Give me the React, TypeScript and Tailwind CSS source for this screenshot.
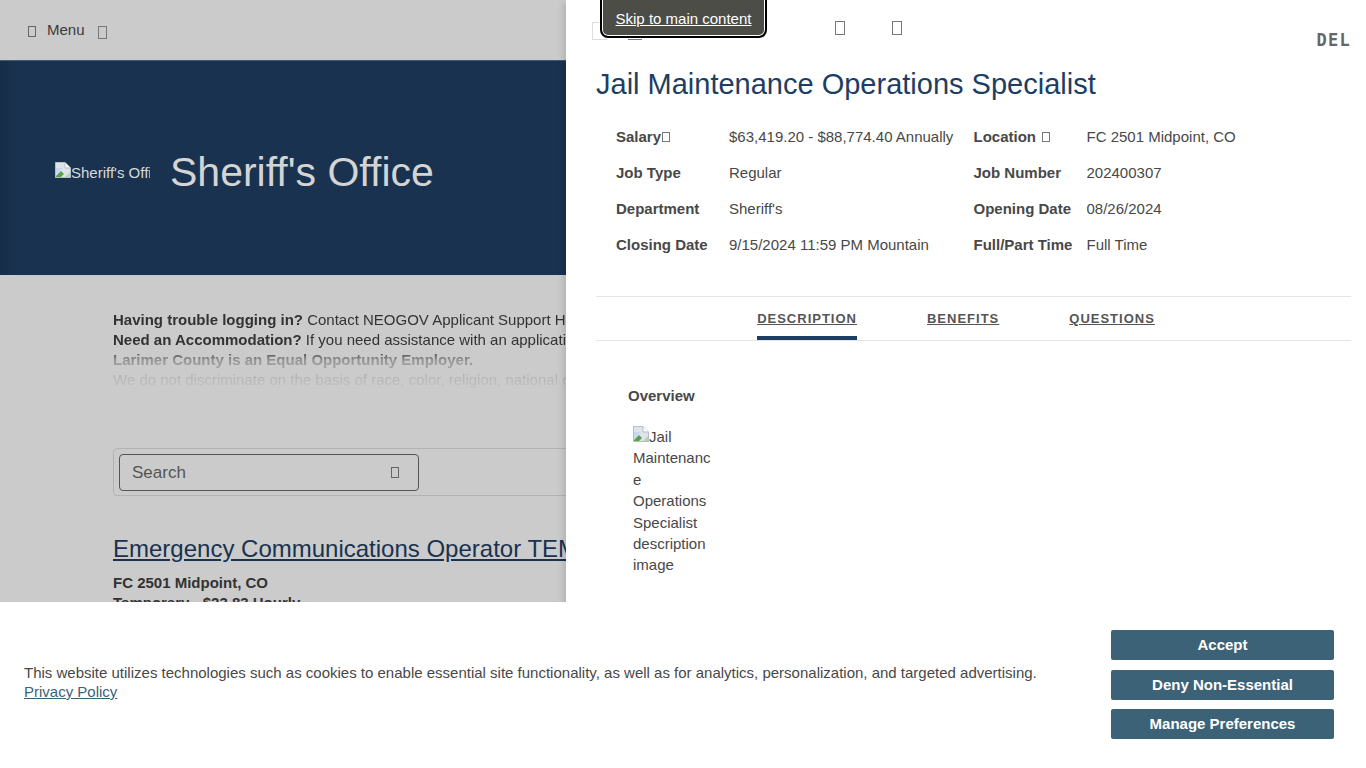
const font = "font-['Liberation_Sans',Arial,sans-serif]";

function Tofu({ className = '' }: { className?: string }) {
  return <span className={`inline-block shrink-0 border border-current ${className}`} />;
}

function BrokenImage() {
  return (
    <svg width="16" height="16" viewBox="0 0 16 16" className="inline-block align-baseline">
      <path d="M0.5 0.5H10L15.5 6V15.5H0.5Z" fill="#dfe3ea" stroke="#b9bdc4" />
      <path d="M1 6H8L1 13Z" fill="#c7d7f2" />
      <path d="M1 14L6 9L9 12L6 15H1Z" fill="#5aa24a" />
      <path d="M10 15L15 10V15Z" fill="#b9d4a8" />
      <path d="M10 .5V6H15.5" fill="#fff" stroke="#b9bdc4" />
    </svg>
  );
}

const facts = [
  ['Salary', '$63,419.20 - $88,774.40 Annually', 'Location', 'FC 2501 Midpoint, CO'],
  ['Job Type', 'Regular', 'Job Number', '202400307'],
  ['Department', "Sheriff's", 'Opening Date', '08/26/2024'],
  ['Closing Date', '9/15/2024 11:59 PM Mountain', 'Full/Part Time', 'Full Time'],
];

function BackgroundPage() {
  return (
    <div className="h-screen overflow-hidden bg-[#cbcbcb] text-[#333]">
      <header className="flex h-[60px] items-center pl-[28px] text-[15px] text-[#3b3b3b]">
        <Tofu className="mt-[2px] h-[11px] w-[8px] text-[#666]" />
        <span className="ml-[11px] mt-[1px]">Menu</span>
        <Tofu className="ml-[13px] mt-[4px] h-[13px] w-[9px] text-[#777]" />
      </header>
      <section className="flex h-[215px] items-center border-t border-[#3d5a78] bg-[linear-gradient(to_right,#162d48,#19324f_16px)] pl-[55px] pt-[9px]">
        <div className="w-[95px] overflow-hidden whitespace-nowrap text-[15px] leading-[20px] text-[#d8d8d8]">
          <BrokenImage />
          Sheriff's Office
        </div>
        <h1 className="ml-[20px] text-[41px] leading-none font-normal text-[#d4d4d4]">Sheriff's Office</h1>
      </section>
      <section className="h-[173px] whitespace-nowrap pl-[113px] pt-[35px] text-[15px] leading-[20px]">
        <div className="h-[100px] overflow-hidden [mask-image:linear-gradient(to_bottom,#000_40%,rgba(0,0,0,0.35)_50%,rgba(0,0,0,0.12)_70%,transparent_85%)]">
          <p><b>Having trouble logging in?</b> Contact NEOGOV Applicant Support Hours</p>
          <p><b>Need an Accommodation?</b> If you need assistance with an application</p>
          <p><b>Larimer County is an Equal Opportunity Employer.</b></p>
          <p>We do not discriminate on the basis of race, color, religion, national origin</p>
        </div>
      </section>
      <div className="ml-[113px] flex h-[48px] w-[600px] items-center rounded-[4px] border border-[#b3b3b3] pl-[5px]">
        <div className="flex h-[37px] w-[300px] items-center justify-between rounded-[4px] border border-[#555] pl-[12px] pr-[19px] text-[17px] text-[#555]">
          <span className="mt-[2px]">Search</span>
          <Tofu className="h-[11px] w-[8px] text-[#666]" />
        </div>
      </div>
      <div className="whitespace-nowrap pl-[113px] pt-[38px]">
        <a className="block text-[24px] leading-[30px] text-[#19324f] underline">Emergency Communications Operator TEMPORARY</a>
        <p className="mt-[9px] text-[15px] leading-[20px] font-bold text-[#333]">FC 2501 Midpoint, CO</p>
        <p className="text-[15px] leading-[20px] font-bold text-[#333]">Temporary - $23.83 Hourly</p>
      </div>
    </div>
  );
}

function JobDrawer() {
  return (
    <aside className="absolute inset-y-0 right-0 w-[800px] overflow-hidden bg-white pl-[30px] pr-[15px] text-[#484848] shadow-[-6px_0_6px_-3px_rgba(0,0,0,0.12)]">
      <div className="relative h-[60px]">
        <Tofu className="absolute left-[-4px] top-[22px] h-[18px] w-[15px] text-[#ddd]" />
        <Tofu className="absolute left-[32px] top-[28px] h-[12px] w-[14px] text-[#777]" />
        <Tofu className="absolute left-[92px] top-[28px] h-[9px] w-[10px] text-[#999]" />
        <Tofu className="absolute left-[239px] top-[21px] h-[14px] w-[10px] text-[#777]" />
        <Tofu className="absolute left-[296px] top-[21px] h-[14px] w-[10px] text-[#777]" />
        <span className="absolute right-0 top-[31px] font-['DejaVu_Sans_Mono',monospace] text-[17px] leading-[18px] font-bold tracking-[1.3px] text-[#666]">DEL</span>
      </div>
      <h2 className="h-[48px] text-[29px] leading-[49px] font-normal text-[#1d3e62]">Jail Maintenance Operations Specialist</h2>
      <div className="mt-[11px] grid grid-cols-[113px_244.5px_113px_1fr] pl-[20px] text-[15px] leading-[36px]">
        {facts.map(([l1, v1, l2, v2]) => (
          <div key={l1} className="contents">
            <div className="flex items-center font-bold">
              {l1}
              {l1 === 'Salary' && <Tofu className="ml-[1px] h-[10px] w-[8px] text-[#777]" />}
            </div>
            <div>{v1}</div>
            <div className="flex items-center font-bold">
              {l2}
              {l2 === 'Location' && <Tofu className="ml-[6px] h-[10px] w-[8px] text-[#777]" />}
            </div>
            <div>{v2}</div>
          </div>
        ))}
      </div>
      <nav className="mt-[33px] flex h-[45px] justify-center gap-[70px] border-y border-[#e5e5e5] pr-[35px] text-[13px] font-bold tracking-[1px] text-[#555]">
        <a className="h-[43px] border-b-4 border-[#1d3e62] pt-[13px] leading-[18px] underline">DESCRIPTION</a>
        <a className="pt-[13px] leading-[18px] underline">BENEFITS</a>
        <a className="pt-[13px] leading-[18px] underline">QUESTIONS</a>
      </nav>
      <div className="pl-[32px] pt-[46px]">
        <h3 className="text-[15px] leading-[18px] font-bold">Overview</h3>
        <div className="ml-[5px] mt-[21px] w-[78px] break-words text-[15px] leading-[21.4px]">
          <BrokenImage />
          Jail Maintenance Operations Specialist description image
        </div>
      </div>
    </aside>
  );
}

function CookieBanner() {
  return (
    <div className="absolute inset-x-0 bottom-0 flex h-[166px] justify-between bg-white pl-[24px] pr-[32px] text-[#484848]">
      <div className="pt-[61px] text-[15px] leading-[19px]">
        <p>This website utilizes technologies such as cookies to enable essential site functionality, as well as for analytics, personalization, and targeted advertising.</p>
        <a className="text-[#3c6278] underline">Privacy Policy</a>
      </div>
      <div className="flex w-[223px] flex-col gap-[9.5px] pt-[28px]">
        {['Accept', 'Deny Non-Essential', 'Manage Preferences'].map((label) => (
          <button key={label} className="h-[30px] rounded-[2px] bg-[#3c6278] pt-[1px] text-[15px] font-bold text-white">
            {label}
          </button>
        ))}
      </div>
    </div>
  );
}

export default function App() {
  return (
    <div className={`relative h-screen overflow-hidden ${font}`}>
      <BackgroundPage />
      <JobDrawer />
      <CookieBanner />
      <a className="absolute left-[600px] top-[-8px] flex h-[46px] w-[167px] items-end justify-center rounded-b-[8px] border-2 border-black bg-[#4d4d48] pb-[8px] text-[15px] leading-[18px] text-white underline shadow-[inset_0_0_0_1px_#fff,0_0_0_1px_#fff]">
        Skip to main content
      </a>
    </div>
  );
}
